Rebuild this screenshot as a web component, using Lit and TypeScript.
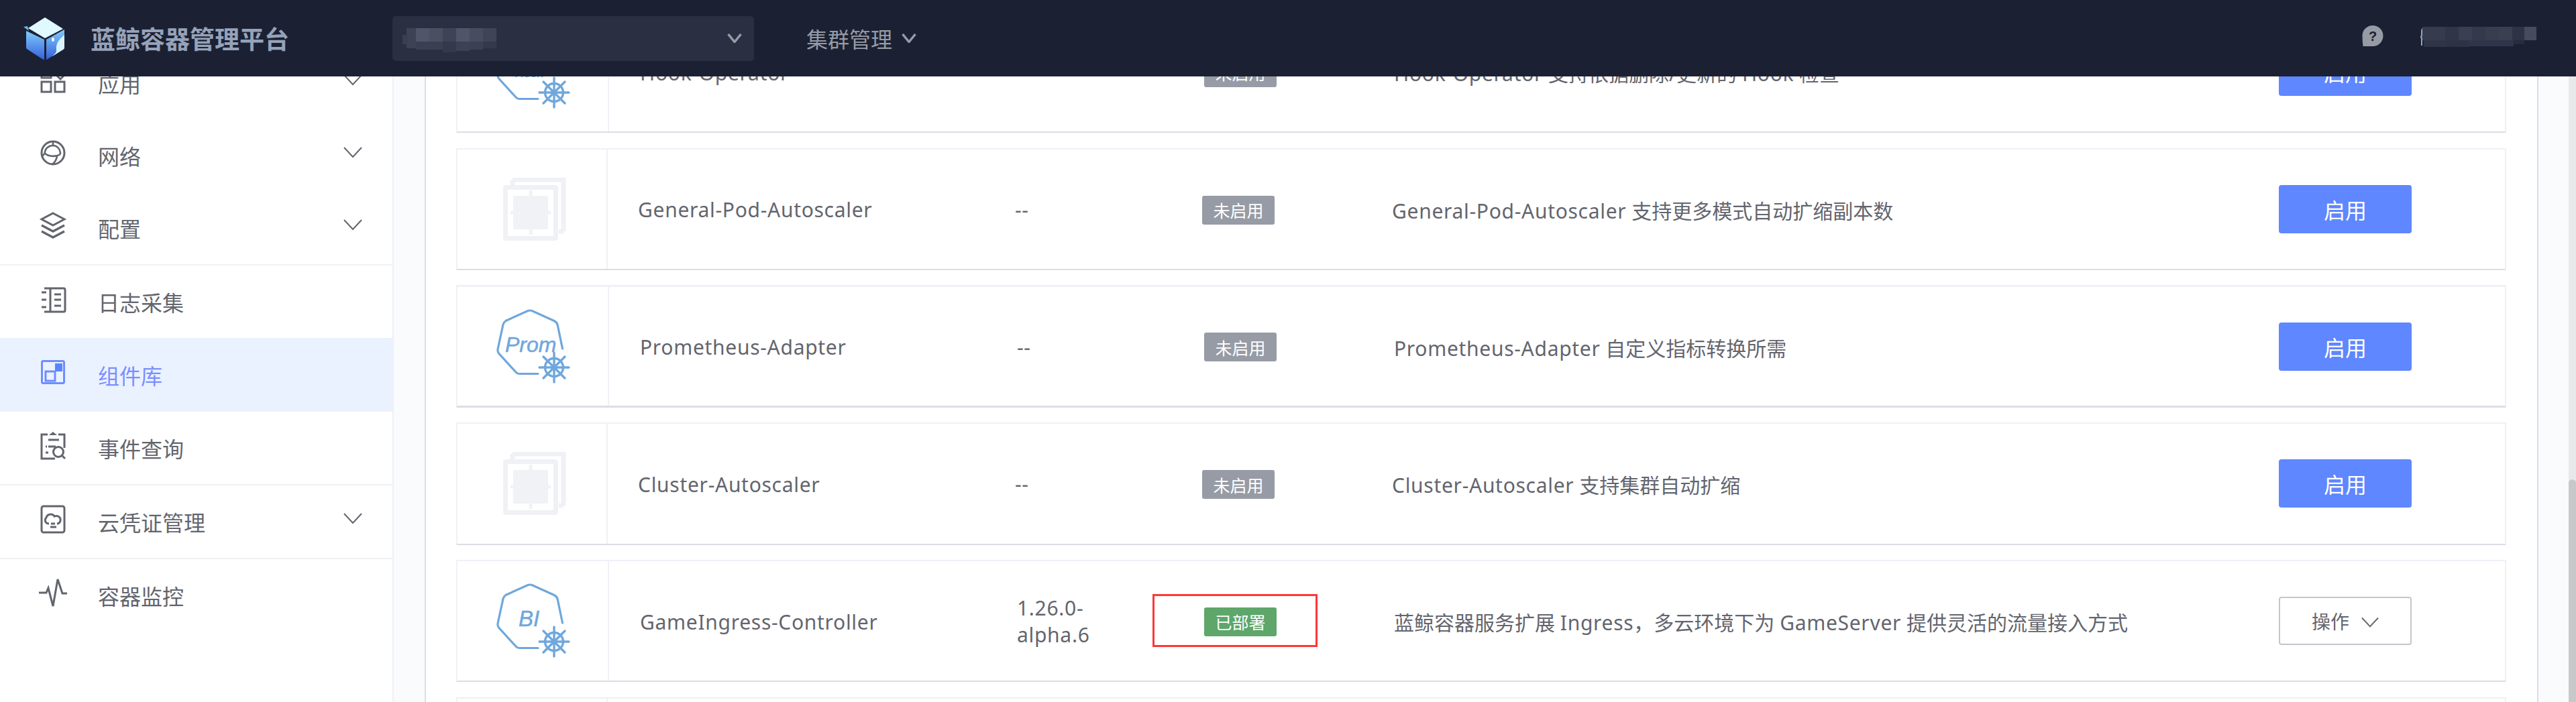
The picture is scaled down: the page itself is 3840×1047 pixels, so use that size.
import { LitElement, html, css, svg } from "lit";
import { customElement } from "lit/decorators.js";

const chevron = html`<svg class="chev" viewBox="0 0 28 28"><path d="M1 7 L14 21 L27 7" /></svg>`;

const navIcons: Record<string, unknown> = {
  app: svg`<rect x="5" y="4" width="14" height="14"/><path d="M33 2 L42 11 L33 20 L24 11 Z"/><rect x="5" y="24" width="14" height="15"/><rect x="25" y="24" width="14" height="15"/>`,
  net: svg`<circle cx="22" cy="22" r="17"/><path d="M9.700 22.700 C10 15 16 11 22 11 C28 11 33 16 33 24 M9.700 22.700 C16 28 27 28 33 24 M28 27 C27 33 25 36 21 39 M22 5 V11 M9.700 22.700 L6 27" stroke-width="2.600"/>`,
  cfg: svg`<path d="M22 4 L39 13 L22 22 L5 13 Z"/><path d="M5 22 L22 31 L39 22 M5 31 L22 40 L39 31" stroke-width="3.400"/>`,
  log: svg`<path d="M9 6 H38 Q40 6 40 8 V39 Q40 41 38 41 H9 M18 6 V41 M5 12 H12 M5 23 H12 M5 34 H12 M24 15 H34 M24 23 H34 M24 32 H34"/>`,
  lib: svg`<rect x="5.500" y="5.500" width="33" height="33" rx="2" class="act"/><path d="M11 21 H25 V35 H11 Z" class="act"/><rect x="25" y="9" width="11" height="12" class="fill"/>`,
  evt: svg`<path d="M14 6 H5 V42 H25 M30 6 H39 V26 M15 14 H31 M15 24 H26 M11 24 H13 M11 33 H15"/><path d="M16 7 L22 2 L28 7 Z" class="solid"/><circle cx="30" cy="32" r="7.500"/><path d="M35 37 L40 42"/>`,
  cred: svg`<rect x="5" y="3" width="34" height="39" rx="3"/><path d="M16 29 C10 29 9 23 12 20 C13 15 21 13 24 18 C30 16 34 20 33 25 C32 28 30 29 28 29 M19 29 H25 M18 34 H27"/>`,
  mon: svg`<path d="M1 22 H12 L15 15 L22 42 L29 2 L36 23 H43"/>`,
};

const navItems = [
  { k: "app", t: "应用", more: true },
  { k: "net", t: "网络", more: true },
  { k: "cfg", t: "配置", more: true, line: true },
  { k: "log", t: "日志采集" },
  { k: "lib", t: "组件库", active: true },
  { k: "evt", t: "事件查询", line: true },
  { k: "cred", t: "云凭证管理", more: true, line: true },
  { k: "mon", t: "容器监控" },
];

const kube = (label: string, size: number, x: number) => svg`
  <svg class="kube" viewBox="0 0 112 112">
    <path class="hull" d="M98.500 58 L91 22 Q90 18.500 86 16.500 L53 1.500 Q50 0.500 47 1.500 L14 16.500 Q11 18.500 10 22 L2 59 Q1.500 62 3.500 65 L29 93 Q31 95.500 34 95.500 L62 95.500"/>
    <text class="klabel" x=${x} y="63" font-size=${size}>${label}</text>
    <g class="helm">
      <circle cx="86" cy="86" r="13.500"/>
      <path d="M86 64 V108 M64 86 H108 M70 70 L102 102 M102 70 L70 102"/>
    </g>
  </svg>`;

const placeholder = svg`
  <svg class="ph" viewBox="0 0 94 94">
    <path class="pb" d="M14 3 H90 V80"/>
    <path class="pb" d="M14 3 V12 M90 80 H83"/>
    <rect class="pb" x="3.500" y="14.500" width="75" height="76" rx="1"/>
    <rect class="pf" x="15" y="27" width="52" height="50" rx="2"/>
    <path class="pp" d="M41 19 V85 M11 52 H71"/>
  </svg>`;

interface Row {
  icon: unknown;
  name: string;
  ver: string;
  on: boolean;
  desc: string;
  ph: boolean;
  thick?: boolean;
  mark?: boolean;
}

const rows: Row[] = [
  { icon: kube("Hook", 18, 28), name: "Hook-Operator", ver: "--", on: false, desc: "Hook-Operator 支持依据删除/更新的 Hook 检查", ph: false },
  { icon: placeholder, name: "General-Pod-Autoscaler", ver: "--", on: false, desc: "General-Pod-Autoscaler 支持更多模式自动扩缩副本数", ph: true },
  { icon: kube("Prom", 32, 13), name: "Prometheus-Adapter", ver: "--", on: false, desc: "Prometheus-Adapter 自定义指标转换所需", ph: false, thick: true },
  { icon: placeholder, name: "Cluster-Autoscaler", ver: "--", on: false, desc: "Cluster-Autoscaler 支持集群自动扩缩", ph: true },
  { icon: kube("BI", 33, 33), name: "GameIngress-Controller", ver: "1.26.0-alpha.6", on: true, desc: "蓝鲸容器服务扩展 Ingress，多云环境下为 GameServer 提供灵活的流量接入方式", ph: false, mark: true },
  { icon: placeholder, name: "", ver: "", on: false, desc: "", ph: true },
];

const mosaic = (cells: [number, number, number, number, string][]) =>
  cells.map(([x, y, w, h, c]) => svg`<rect x=${x} y=${y} width=${w} height=${h} fill=${c} />`);

const latinRuns = (text: string) =>
  text.split(/([A-Za-z][A-Za-z-]*)/).map((part, i) => (i % 2 ? html`<span class="lat">${part}</span>` : part));

@customElement("app-root")
export class AppRoot extends LitElement {
  static styles = css`
    :host {
      display: flex;
      flex-direction: column;
      width: 3840px;
      height: 1047px;
      overflow: hidden;
      font-family: "Noto Sans", "Noto Sans CJK SC", sans-serif;
      color: #63656e;
      background: #fff;
    }
    .top {
      flex: 0 0 114px;
      display: flex;
      align-items: center;
      background: #1b2133;
      color: #979ba5;
    }
    .logo { width: 64px; height: 66px; margin-left: 35px; flex: none; }
    .title {
      margin-left: 36px;
      width: 450px;
      font-size: 37px;
      font-weight: 700;
      color: #96a2b9;
      white-space: nowrap;
    }
    .select {
      width: 539px;
      height: 67px;
      box-sizing: border-box;
      padding: 0 18px 0 15px;
      display: flex;
      align-items: center;
      justify-content: space-between;
      background: #2a2f42;
      border-radius: 5px;
      flex: none;
    }
    .blur1 { width: 140px; height: 36px; margin-top: 5px; }
    .tchev { width: 22px; height: 14px; fill: none; stroke: #979ba5; stroke-width: 3.500; }
    .clusters {
      margin-left: 78px;
      display: flex;
      align-items: center;
      gap: 14px;
      font-size: 32px;
      color: #979ba5;
    }
    .spacer { flex: 1; }
    .help { width: 32px; height: 33px; margin-right: 54px; margin-top: -8px; }
    .help path { fill: #979ba5; }
    .help text { font: 700 20px "Liberation Sans", sans-serif; fill: #1b2133; }
    .blur2 { width: 174px; height: 33px; margin-right: 59px; margin-top: -2px; }
    .curl { fill: none; stroke: #8ea6c6; stroke-width: 2; }

    .body { flex: 1; display: flex; min-height: 0; overflow: hidden; }
    .side {
      flex: 0 0 585px;
      border-right: 2px solid #eff0f5;
      overflow: hidden;
    }
    .nav { margin-top: -44px; }
    .item {
      height: 108px;
      display: flex;
      align-items: center;
      padding-left: 57px;
      padding-right: 45px;
      font-size: 32px;
    }
    .item.line { border-bottom: 2px solid #f0f1f5; }
    .item.active { background: #ebf2ff; color: #7a8fff; height: 110px; }
    .nicon {
      width: 44px;
      height: 44px;
      flex: none;
      margin: -8px 45px 0 0;
      fill: none;
      stroke: #63656e;
      stroke-width: 3;
    }
    .nicon .act { stroke: #6f8dff; }
    .nicon .fill { fill: #5b85ff; stroke: none; }
    .nicon .solid { fill: #63656e; stroke: none; }
    .ntext { flex: 1; }
    .chev {
      width: 28px;
      height: 28px;
      margin-top: -10px;
      fill: none;
      stroke: #63656e;
      stroke-width: 2;
    }
    .gutter { flex: 0 0 46px; background: #fafbfd; }
    .gutter.l { border-right: 2px solid #dcdee5; }
    .gutter.r { border-left: 2px solid #dcdee5; flex-basis: 45px; }
    .panel {
      flex: 1;
      min-width: 0;
      box-sizing: border-box;
      padding: 0 46px 0 45px;
      background: #fff;
      overflow: hidden;
    }
    .list {
      margin-top: -98.1px;
      display: flex;
      flex-direction: column;
      gap: 22.35px;
    }
    .row {
      position: relative;
      height: 182.4px;
      flex: none;
      box-sizing: border-box;
      display: grid;
      grid-template-columns: 226px 608px 200px 362px 1319px 1fr;
      align-items: center;
      border: 2px solid #f0f1f5;
      border-top-color: #eef1f6;
      border-bottom-color: #dcdde5;
      background: #fff;
      font-size: 30px;
    }
    .row.odd { grid-template-columns: 224px 608px 200px 361px 1322px 1fr; }
    .row.thick { border-top-width: 3px; border-bottom-width: 3px; }
    .logoCell {
      align-self: stretch;
      display: flex;
      align-items: center;
      justify-content: center;
      border-right: 2px solid #f0f1f5;
    }
    .kube { width: 112px; height: 112px; margin: 2px 0 0 4px; overflow: visible; }
    .hull { fill: none; stroke: #6fa7dc; stroke-width: 3.200; stroke-linecap: round; }
    .klabel {
      font-family: "Liberation Sans", sans-serif;
      font-style: italic;
      fill: #6fa7dc;
      stroke: #6fa7dc;
      stroke-width: 0.5;
    }
    .helm { fill: none; stroke: #6fa7dc; stroke-width: 3.400; stroke-linecap: round; }
    .ph { width: 94px; height: 94px; margin: 0 0 0 8px; }
    .pb { fill: none; stroke: #f0f1f5; stroke-width: 7; }
    .pf { fill: #f0f2f6; }
    .pp { fill: none; stroke: #f0f2f6; stroke-width: 5; }
    .name, .desc { position: relative; top: 1px; white-space: nowrap; }
    .name { padding-left: 46px; letter-spacing: 0.7px; }
    .lat { letter-spacing: 0.7px; }
    .row.odd .name { padding-left: 45px; }
    .ver { width: 170px; line-height: 40px; letter-spacing: 0.7px; position: relative; top: 1px; }
    .row.odd .ver { margin-left: -1px; }
    .status { padding-left: 79px; position: relative; }
    .row.odd .status { padding-left: 78px; }
    .tag {
      display: inline-flex;
      align-items: center;
      justify-content: center;
      width: 108px;
      height: 43px;
      border-radius: 3px;
      background: #979ba5;
      color: #fff;
      font-size: 25px;
      vertical-align: middle;
    }
    .tag.on { background: #5ea66a; }
    .mark {
      position: absolute;
      left: 2px;
      top: -17px;
      width: 246px;
      height: 79px;
      box-sizing: border-box;
      border: 3px solid #ff3636;
    }
    .btn {
      width: 198px;
      height: 72px;
      box-sizing: border-box;
      border-radius: 4px;
      display: flex;
      align-items: center;
      justify-content: center;
      background: #5f87ff;
      color: #fff;
      font-size: 32px;
    }
    .btn.op {
      background: #fff;
      color: #63656e;
      border: 2px solid #c4c6cc;
      font-size: 28px;
      gap: 18px;
    }
    .btn .chev { width: 26px; height: 26px; margin-top: 4px; }
    .bar { flex: 0 0 11px; background: #e8e8e8; display: flex; flex-direction: column; }
    .thumb {
      margin-top: 601px;
      flex: 1;
      background: #c8c8c8;
      border-radius: 6px 6px 0 0;
    }
  `;

  render() {
    return html`
      <div class="top">
        <svg class="logo" viewBox="36 22 64 66">
          <defs>
            <linearGradient id="lg" x1="0" y1="0" x2="0" y2="1">
              <stop offset="0" stop-color="#7fcbfb" />
              <stop offset="1" stop-color="#3660dc" />
            </linearGradient>
          </defs>
          <path d="M36 38 L42 37 L44 44 Z" fill="#63bdf3" />
          <path d="M68 24 L95 41 L68 55 L43 40 Z" fill="#e0f9ff" />
          <path d="M40 44 L67 57 V87 Q66 87 64 86 L41 71 Q40 70 40 69 Z" fill="url(#lg)" />
          <path d="M70 57 L97 42 V69 Q97 71 95 72 L72 86 L70 87 Z" fill="url(#lg)" />
          <path d="M97 50 C90 56 84 62 85 72 C86 76 82 79 79 82 L95 72 Q97 71 97 69 Z" fill="#d9f4ff" />
          <ellipse cx="80" cy="57" rx="1.800" ry="3" fill="#fff" />
        </svg>
        <div class="title">蓝鲸容器管理平台</div>
        <div class="select">
          <svg class="blur1" viewBox="0 0 140 36">
            ${mosaic([
              [6, 0, 14, 30, "#3d4254"],
              [0, 10, 8, 14, "#3a3f51"],
              [20, 0, 20, 20, "#50556a"],
              [40, 0, 20, 20, "#4a4f62"],
              [60, 0, 20, 20, "#3e4356"],
              [80, 0, 20, 20, "#50556a"],
              [100, 0, 20, 20, "#474c5f"],
              [120, 0, 20, 20, "#3f4457"],
              [20, 20, 40, 12, "#3a3f51"],
              [60, 20, 20, 16, "#34394b"],
              [80, 20, 20, 14, "#3c4153"],
              [100, 20, 20, 12, "#3b4052"],
              [120, 20, 20, 10, "#35394b"],
            ])}
          </svg>
          <svg class="tchev" viewBox="0 0 22 14"><path d="M1.500 1 L11 12.500 L20.500 1" /></svg>
        </div>
        <div class="clusters">
          集群管理
          <svg class="tchev" viewBox="0 0 22 14"><path d="M1.500 1 L11 12.500 L20.500 1" /></svg>
        </div>
        <div class="spacer"></div>
        <svg class="help" viewBox="0 0 32 33">
          <path d="M16 1 A15.500 15.500 0 1 1 16 32 L1.500 32 Q0.500 24 0.500 16 A15.500 15.500 0 0 1 16 1 Z" />
          <text x="16" y="24" text-anchor="middle">?</text>
        </svg>
        <svg class="blur2" viewBox="0 0 174 33">
          <path class="curl" d="M7 2 Q3 2 3 7 V12 Q3 15 1 15 Q3 15 3 18 V28" />
          ${mosaic([
            [4, 0, 34, 20, "#363c4e"],
            [6, 20, 34, 10, "#2f3546"],
            [38, 0, 20, 20, "#303648"],
            [58, 0, 20, 20, "#3a3f51"],
            [78, 0, 20, 20, "#343a4c"],
            [98, 0, 20, 20, "#383d50"],
            [118, 0, 20, 20, "#3a3f51"],
            [138, 0, 18, 20, "#2e3345"],
            [156, 0, 18, 20, "#474b5c"],
            [40, 20, 34, 10, "#2d3244"],
            [74, 20, 66, 9, "#30354a"],
            [140, 20, 16, 6, "#262c3e"],
          ])}
        </svg>
      </div>
      <div class="body">
        <div class="side">
          <div class="nav">
            ${navItems.map(
              (n) => html`
                <div class="item ${n.active ? "active" : ""} ${n.line ? "line" : ""}">
                  <svg class="nicon" viewBox="0 0 44 44">${navIcons[n.k]}</svg>
                  <span class="ntext">${n.t}</span>
                  ${n.more ? chevron : ""}
                </div>
              `
            )}
          </div>
        </div>
        <div class="gutter l"></div>
        <div class="panel">
          <div class="list">
            ${rows.map(
              (r) => html`
                <div class="row ${r.ph ? "odd" : ""} ${r.thick ? "thick" : ""}">
                  <div class="logoCell">${r.icon}</div>
                  <div class="name">${r.name}</div>
                  <div class="ver">${r.ver}</div>
                  <div class="status">
                    ${r.name
                      ? html`<span class="tag ${r.on ? "on" : ""}">${r.on ? "已部署" : "未启用"}</span>`
                      : ""}
                    ${r.mark ? html`<div class="mark"></div>` : ""}
                  </div>
                  <div class="desc">${latinRuns(r.desc)}</div>
                  <div>
                    ${!r.name
                      ? ""
                      : r.on
                      ? html`<div class="btn op">操作 ${chevron}</div>`
                      : html`<div class="btn">启用</div>`}
                  </div>
                </div>
              `
            )}
          </div>
        </div>
        <div class="gutter r"></div>
        <div class="bar"><div class="thumb"></div></div>
      </div>
    `;
  }
}
